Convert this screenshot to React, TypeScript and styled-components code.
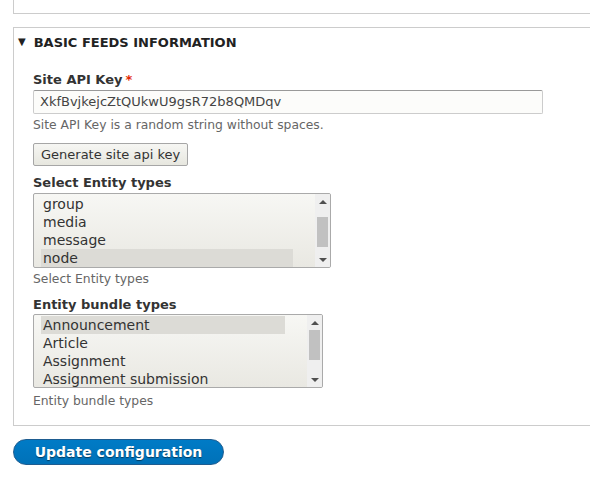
import React from "react";
import styled, { createGlobalStyle } from "styled-components";

const Global = createGlobalStyle`
  html, body { margin: 0; padding: 0; overflow: hidden; background: #fff; }
  body { font-family: "DejaVu Sans", Verdana, sans-serif; color: #333; }
`;

const Page = styled.div`
  width: 590px;
  height: 493px;
  overflow: hidden;
`;

const TopFieldset = styled.div`
  margin-left: 13px;
  width: 600px;
  height: 13px;
  border: 1px solid #ccc;
  border-top: none;
`;

const Fieldset = styled.div`
  margin: 13px 0 0 13px;
  width: 600px;
  border: 1px solid #ccc;
  padding: 6px 0 16px 0;
  display: flex;
  flex-direction: column;
`;

const Legend = styled.div`
  display: flex;
  align-items: center;
  gap: 8px;
  padding-left: 4px;
  font-weight: bold;
  font-size: 13px;
  text-transform: uppercase;
  color: #222;
  height: 16px;
`;

const Arrow = styled.span`
  font-size: 10px;
  line-height: 1;
`;

const Body = styled.div`
  padding: 21px 0 0 19px;
  display: flex;
  flex-direction: column;
`;

const Item = styled.div<{ $mb?: number }>`
  display: flex;
  flex-direction: column;
  align-items: flex-start;
  margin-bottom: ${(p) => p.$mb ?? 0}px;
`;

const Label = styled.label<{ $mb?: number }>`
  font-weight: bold;
  font-size: 13px;
  color: #333;
  line-height: 18px;
  margin-bottom: ${(p) => p.$mb ?? 1}px;
`;

const Req = styled.span`
  color: #e32700;
  margin-left: 3px;
`;

const TextInput = styled.div`
  box-sizing: border-box;
  width: 510px;
  height: 24px;
  border: 1px solid #ccc;
  border-top-color: #999;
  border-radius: 2px;
  background: #fcfcfa;
  font-size: 13px;
  color: #444;
  padding: 3px 6px;
  line-height: 16px;
`;

const Desc = styled.div<{ $mt?: number }>`
  font-size: 12.35px;
  color: #666;
  line-height: 16px;
  margin-top: ${(p) => p.$mt ?? 3}px;
`;

const GrayButton = styled.button`
  box-sizing: border-box;
  height: 23px;
  padding: 0 7px;
  border: 1px solid #a6a6a6;
  border-radius: 2px;
  background: linear-gradient(#f6f6f3, #e7e7df);
  font-family: "DejaVu Sans", Verdana, sans-serif;
  font-size: 13px;
  color: #333;
  margin-top: 10px;
  margin-bottom: 8px;
`;

const ListBox = styled.div<{ $w: number; $h: number }>`
  box-sizing: border-box;
  width: ${(p) => p.$w}px;
  height: ${(p) => p.$h}px;
  border: 1px solid #aaa;
  border-radius: 2px;
  background: linear-gradient(#f7f7f4, #e9e8e2);
  display: flex;
  overflow: hidden;
`;

const Options = styled.div`
  flex: 1;
  padding: 1px 0 0 7px;
  display: flex;
  flex-direction: column;
  overflow: hidden;
`;

const Option = styled.div<{ $sel?: boolean; $w: number }>`
  width: ${(p) => p.$w}px;
  height: 18px;
  line-height: 18px;
  font-size: 14px;
  color: #333;
  padding-left: 2px;
  background: ${(p) => (p.$sel ? "#dcdbd6" : "transparent")};
`;

const Scrollbar = styled.div`
  width: 15px;
  background: #efefef;
  display: flex;
  flex-direction: column;
  align-items: center;
  padding: 6px 0 5px;
  box-sizing: border-box;
`;

const Thumb = styled.div<{ $top: number }>`
  width: 11px;
  height: 30px;
  background: #c1c1c1;
  margin-top: ${(p) => p.$top}px;
  flex: none;
`;

const Spacer = styled.div`
  flex: 1;
`;

const Tri = styled.div<{ $down?: boolean }>`
  width: 0;
  height: 0;
  flex: none;
  border-left: 4px solid transparent;
  border-right: 4px solid transparent;
  ${(p) =>
    p.$down
      ? "border-top: 4px solid #505050;"
      : "border-bottom: 4px solid #505050;"}
`;

const PrimaryButton = styled.button`
  box-sizing: border-box;
  margin: 13px 0 0 13px;
  width: 211px;
  height: 26px;
  border-radius: 20px;
  border: 1px solid #1e5c90;
  background: linear-gradient(#007bc6, #0071b8);
  color: #fff;
  font-family: "DejaVu Sans", Verdana, sans-serif;
  font-weight: bold;
  font-size: 14px;
  text-shadow: 0 1px 1px rgba(0, 0, 0, 0.5);
  padding: 0;
`;

function List({
  w,
  h,
  optW,
  items,
  sel,
  thumbTop,
}: {
  w: number;
  h: number;
  optW: number;
  items: string[];
  sel: number;
  thumbTop: number;
}) {
  return (
    <ListBox $w={w} $h={h}>
      <Options>
        {items.map((t, i) => (
          <Option key={t} $sel={i === sel} $w={optW}>
            {t}
          </Option>
        ))}
      </Options>
      <Scrollbar>
        <Tri />
        <Thumb $top={thumbTop} />
        <Spacer />
        <Tri $down />
      </Scrollbar>
    </ListBox>
  );
}

export default function App() {
  return (
    <Page>
      <Global />
      <TopFieldset />
      <Fieldset>
        <Legend>
          <Arrow>▼</Arrow>
          Basic feeds information
        </Legend>
        <Body>
          <Item>
            <Label>
              Site API Key<Req>*</Req>
            </Label>
            <TextInput>XkfBvjkejcZtQUkwU9gsR72b8QMDqv</TextInput>
            <Desc>Site API Key is a random string without spaces.</Desc>
          </Item>
          <Item>
            <GrayButton>Generate site api key</GrayButton>
          </Item>
          <Item $mb={9}>
            <Label>Select Entity types</Label>
            <List
              w={298}
              h={75}
              optW={250}
              items={["group", "media", "message", "node"]}
              sel={3}
              thumbTop={13}
            />
            <Desc>Select Entity types</Desc>
          </Item>
          <Item>
            <Label $mb={0}>Entity bundle types</Label>
            <List
              w={290}
              h={74}
              optW={242}
              items={["Announcement", "Article", "Assignment", "Assignment submission"]}
              sel={0}
              thumbTop={5}
            />
            <Desc $mt={5}>Entity bundle types</Desc>
          </Item>
        </Body>
      </Fieldset>
      <PrimaryButton>Update configuration</PrimaryButton>
    </Page>
  );
}
